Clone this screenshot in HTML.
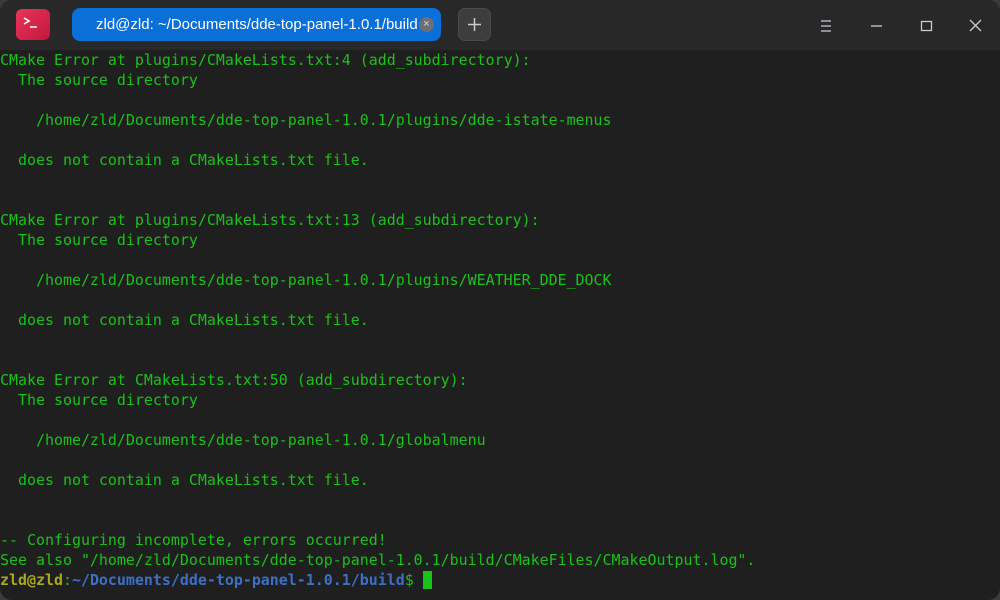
<!DOCTYPE html>
<html><head><meta charset="utf-8"><style>
html,body{margin:0;padding:0;background:#3a3a3a;}
.win{position:absolute;left:0;top:0;width:1000px;height:600px;background:#1f1f1f;border-radius:12px;overflow:hidden;}
.tb{position:absolute;left:0;top:0;width:1000px;height:50px;background:#282828;}
.logo{position:absolute;left:16px;top:9px;width:34px;height:31px;border-radius:6px;background:linear-gradient(135deg,#e8355c,#c3163a);}
.tab{position:absolute;left:72px;top:8px;width:369px;height:33px;border-radius:8px;background:#0a6fd6;color:#fff;font:15px "Liberation Sans",sans-serif;line-height:33px;}
.tab span{position:absolute;left:24px;}
.cls{position:absolute;left:347px;top:9px;width:15px;height:15px;border-radius:50%;background:#6b6f78;color:#ddd;font-size:11px;line-height:15px;text-align:center;}
.plus{position:absolute;left:458px;top:8px;width:33px;height:33px;border-radius:7px;background:#3d3d3d;border:1px solid #4a4a4a;box-sizing:border-box;}
pre{position:absolute;left:0;top:50px;margin:0;font:14.95px "DejaVu Sans Mono","Liberation Mono",monospace;line-height:20px;color:#19c219;}
.y{color:#a8a81a;font-weight:bold}.b{color:#3c70c8;font-weight:bold}
.cur{display:inline-block;width:9px;height:18px;background:#19c219;vertical-align:-4px;}
</style></head><body><div class="win">
<div class="tb">
<div class="logo"><svg width="34" height="31"><path d="M8 9 L13 12 L8 15" stroke="#fff" stroke-width="1.6" fill="none"/><path d="M14 18 H21" stroke="#fff" stroke-width="1.6"/></svg></div>
<div class="tab"><span>zld@zld: ~/Documents/dde-top-panel-1.0.1/build</span><div class="cls">×</div></div>
<div class="plus"><svg width="31" height="31"><path d="M15.5 9v13M9 15.5h13" stroke="#ccc" stroke-width="1.5"/></svg></div>
<svg style="position:absolute;left:800px;top:0" width="200" height="50"><g stroke="#c8cbd6" stroke-width="1.3" fill="none"><path d="M21 21h10M21 26h10M21 31h10"/><path d="M71 26h11"/><rect x="121.5" y="21.5" width="10" height="9"/><path d="M170 20l11 11M181 20l-11 11"/></g></svg>
</div>
<pre>CMake Error at plugins/CMakeLists.txt:4 (add_subdirectory):
  The source directory

    /home/zld/Documents/dde-top-panel-1.0.1/plugins/dde-istate-menus

  does not contain a CMakeLists.txt file.


CMake Error at plugins/CMakeLists.txt:13 (add_subdirectory):
  The source directory

    /home/zld/Documents/dde-top-panel-1.0.1/plugins/WEATHER_DDE_DOCK

  does not contain a CMakeLists.txt file.


CMake Error at CMakeLists.txt:50 (add_subdirectory):
  The source directory

    /home/zld/Documents/dde-top-panel-1.0.1/globalmenu

  does not contain a CMakeLists.txt file.


-- Configuring incomplete, errors occurred!
See also "/home/zld/Documents/dde-top-panel-1.0.1/build/CMakeFiles/CMakeOutput.log".
<span class="y">zld@zld</span>:<span class="b">~/Documents/dde-top-panel-1.0.1/build</span>$ <span class="cur"></span></pre>
</div></body></html>
